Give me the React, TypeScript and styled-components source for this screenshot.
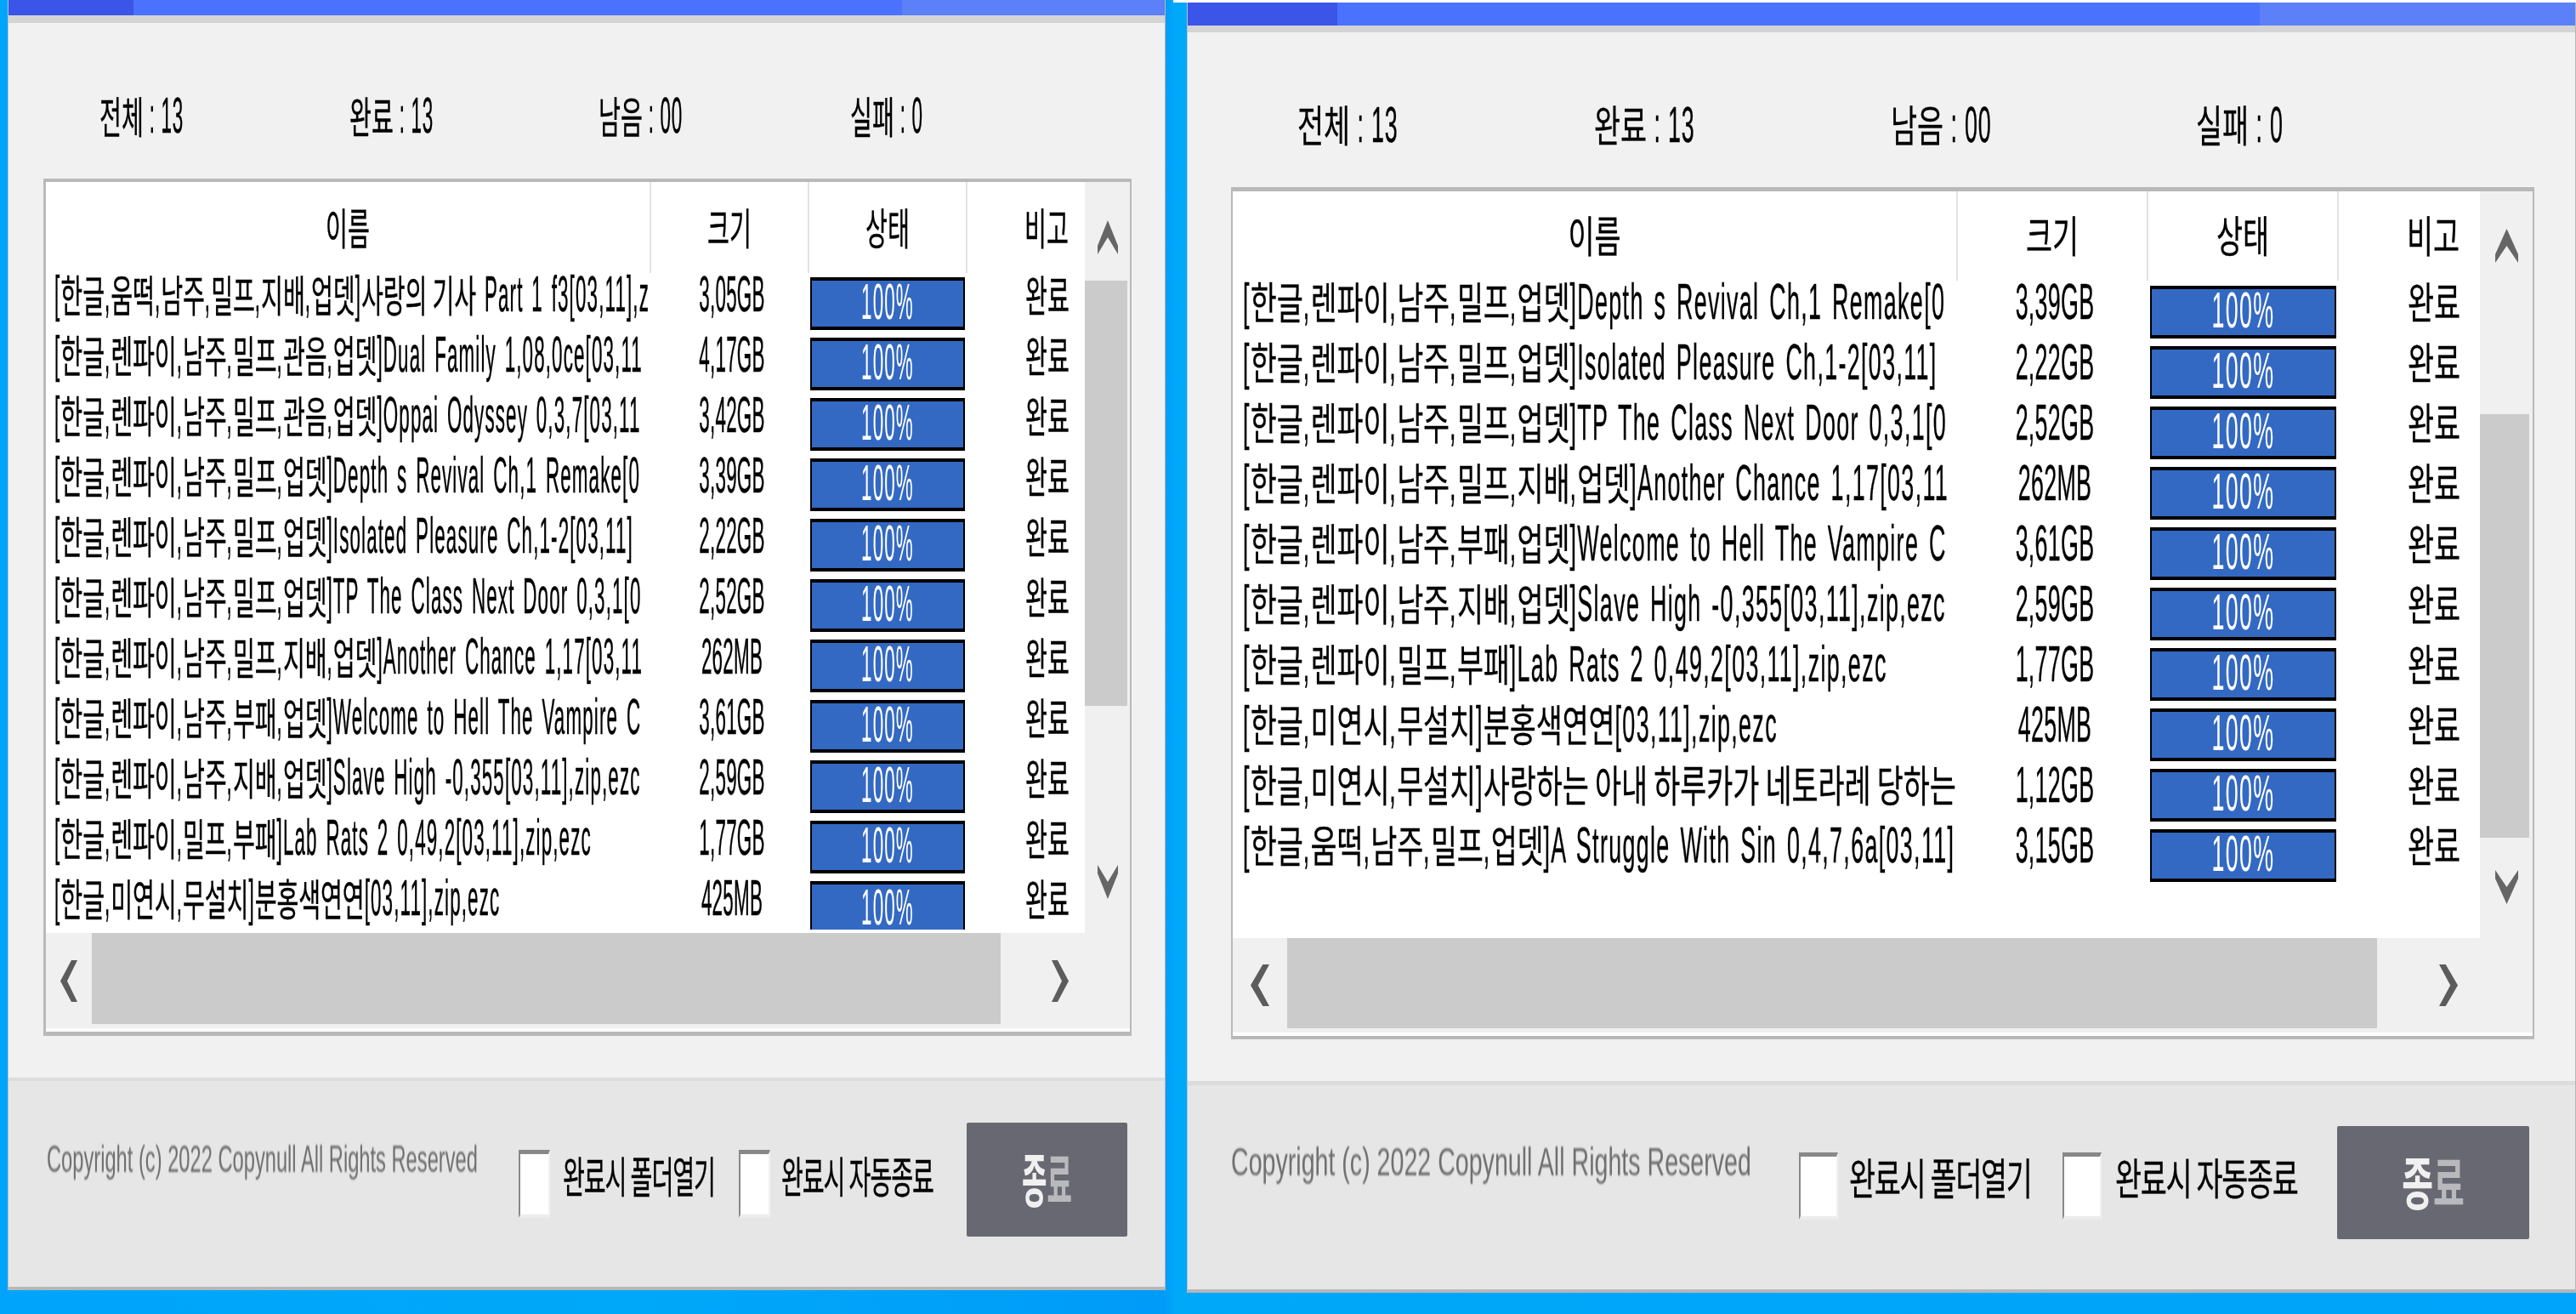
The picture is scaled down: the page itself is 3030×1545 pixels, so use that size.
import styled, { createGlobalStyle, ThemeProvider } from 'styled-components';

// every measure that differs between the two windows
const leftWin = {
  winW: 1362, winH: 1517, edge: 0, indent: 0, titleH: 18, bandH: 9,
  segs: '147px 904px 1fr', statCols: '294px 293px 296px auto', statPad: 107, statsH: 183,
  fs: 28.2, sy: 1.81, panelX: 41, panelW: 1280, panelH: 1008,
  bt: 4, bb: 5, bl: 3, br: 2, cols: '710px 186px 186px 140px', tableH: 883, headH: 107,
  namePad: 10, barL: 3, barT: 5, barW: 182, notePad: 52,
  vW: 53, thumbW: 50, thumbH: 500, upTop: 45, thumbTop: 31, downTop: 187, arrowW: 24,
  hH: 112, hLeft: 54, hThumbW: 1069, hThumbH: 107, arrowTop: 32, hArrowX: 60, hArrowW: 20,
  footPad: 45, footCols: '555px 52px 207px 50px 218px 189px', sepH: 4,
  copyTop: 67, copyFs: 23.7, copySy: 1.9, cbTop: 81, cbW: 37, cbH: 80, labelTop: 86,
  btnTop: 49, btnW: 189, btnH: 134, btnFs: 32, btnSy: 2.15,
};

const rightWin = {
  winW: 1634, winH: 1517, edge: 3, indent: 16, titleH: 27, bandH: 8,
  segs: '176px 1085px 1fr', statCols: '349px 349px 359px auto', statPad: 129, statsH: 182,
  fs: 33.8, sy: 1.51, panelX: 51, panelW: 1533, panelH: 1002,
  bt: 5, bb: 4, bl: 2, br: 2, cols: '851px 224px 224px 168px', tableH: 878, headH: 105,
  namePad: 12, barL: 4, barT: 6, barW: 219, notePad: 60,
  vW: 62, thumbW: 58, thumbH: 498, upTop: 44, thumbTop: 178, downTop: 38, arrowW: 27,
  hH: 111, hLeft: 64, hThumbW: 1282, hThumbH: 106, arrowTop: 31, hArrowX: 73, hArrowW: 22,
  footPad: 51, footCols: '668px 59px 251px 62px 261px 226px', sepH: 5,
  copyTop: 65, copyFs: 28.6, copySy: 1.6, cbTop: 79, cbW: 46, cbH: 79, labelTop: 84,
  btnTop: 48, btnW: 226, btnH: 133, btnFs: 40, btnSy: 1.7,
};

type Metrics = typeof leftWin;
const m = (k: keyof Metrics) => (p: any) => (p.theme as Metrics)[k];

const leftRows = [
  ['[한글,움떡,남주,밀프,지배,업뎃]사랑의 기사 Part 1 f3[03,11],z', '3,05GB'],
  ['[한글,렌파이,남주,밀프,관음,업뎃]Dual Family 1,08,0ce[03,11', '4,17GB'],
  ['[한글,렌파이,남주,밀프,관음,업뎃]Oppai Odyssey 0,3,7[03,11', '3,42GB'],
  ['[한글,렌파이,남주,밀프,업뎃]Depth s Revival Ch,1 Remake[0', '3,39GB'],
  ['[한글,렌파이,남주,밀프,업뎃]Isolated Pleasure Ch,1-2[03,11]', '2,22GB'],
  ['[한글,렌파이,남주,밀프,업뎃]TP The Class Next Door 0,3,1[0', '2,52GB'],
  ['[한글,렌파이,남주,밀프,지배,업뎃]Another Chance 1,17[03,11', '262MB'],
  ['[한글,렌파이,남주,부패,업뎃]Welcome to Hell The Vampire C', '3,61GB'],
  ['[한글,렌파이,남주,지배,업뎃]Slave High -0,355[03,11],zip,ezc', '2,59GB'],
  ['[한글,렌파이,밀프,부패]Lab Rats 2 0,49,2[03,11],zip,ezc', '1,77GB'],
  ['[한글,미연시,무설치]분홍색연연[03,11],zip,ezc', '425MB'],
];

const rightRows = [
  ...leftRows.slice(3, 6),
  ...leftRows.slice(6, 11),
  ['[한글,미연시,무설치]사랑하는 아내 하루카가 네토라레 당하는', '1,12GB'],
  ['[한글,움떡,남주,밀프,업뎃]A Struggle With Sin 0,4,7,6a[03,11]', '3,15GB'],
];

// hangul and latin runs get their own proportions, the latin of the old font is narrower and taller
const Runs = ({ text }: { text: string }) => (
  <>
    {text.split(/([\uAC00-\uD7A3]+)/).map((run, i) =>
      i % 2 === 1 || run === ' ' ? run : run && <Latin key={i}>{run}</Latin>
    )}
  </>
);

const Label = ({ text }: { text: string }) => (
  <Tall><Runs text={text} /></Tall>
);

const Chevron = ({ dir }: { dir: 'up' | 'down' | 'left' | 'right' }) => {
  if (dir === 'up' || dir === 'down') {
    return (
      <ArrowV viewBox="0 0 24 40" preserveAspectRatio="none">
        <path
          d={dir === 'up' ? 'M12 0 L24 30 V40 L12 20 L0 40 V30 Z' : 'M12 40 L24 10 V0 L12 20 L0 0 V10 Z'}
          fill="#666666"
        />
      </ArrowV>
    );
  }
  return (
    <ArrowH viewBox="0 0 20 49" preserveAspectRatio="none">
      <path
        d={dir === 'left' ? 'M13 0 H20 L8 24.5 L20 49 H13 L0 24.5 Z' : 'M7 0 H0 L12 24.5 L0 49 H7 L20 24.5 Z'}
        fill="#5c5c5c"
      />
    </ArrowH>
  );
};

const CopyWindow = ({ rows }: { rows: string[][] }) => (
  <Frame>
    <Win>
      <TitleBar>
        <TitleSeg $color="#3a55e8" />
        <TitleSeg $color="#4a72ff" />
        <TitleSeg $color="#5b80f8" />
      </TitleBar>
      <Band />
      <Main>
        <Stats>
          <Label text="전체 : 13" />
          <Label text="완료 : 13" />
          <Label text="남음 : 00" />
          <Label text="실패 : 0" />
        </Stats>
        <Panel>
          <TopPart>
            <Table>
              <Head>
                <HeadCell><Label text="이름" /></HeadCell>
                <HeadCell $divider><Label text="크기" /></HeadCell>
                <HeadCell $divider><Label text="상태" /></HeadCell>
                <NoteHead $divider><Label text="비고" /></NoteHead>
              </Head>
              {rows.map(([name, size], i) => (
                <Row key={name}>
                  <NameCell><Label text={name} /></NameCell>
                  <SizeCell><Label text={size} /></SizeCell>
                  <div>
                    {/* the 11th row runs out of the list and its bar is cut there */}
                    <Bar $cut={i === 10}><BarText><Latin>100%</Latin></BarText></Bar>
                  </div>
                  <NoteCell><Label text="완료" /></NoteCell>
                </Row>
              ))}
            </Table>
            <VScroll>
              <UpSlot><Chevron dir="up" /></UpSlot>
              <VThumb />
              <DownSlot><Chevron dir="down" /></DownSlot>
            </VScroll>
          </TopPart>
          <HScroll>
            <HSlotLeft><Chevron dir="left" /></HSlotLeft>
            <HThumb />
            <HSlotRight><Chevron dir="right" /></HSlotRight>
          </HScroll>
        </Panel>
      </Main>
      <Footer>
        <Copyright>Copyright (c) 2022 Copynull All Rights Reserved</Copyright>
        <Check type="checkbox" />
        <FootLabel><Label text="완료시 폴더열기" /></FootLabel>
        <Check type="checkbox" />
        <FootLabel><Label text="완료시 자동종료" /></FootLabel>
        <CloseButton>
          <span>종</span><DimGlyph>료</DimGlyph>
        </CloseButton>
      </Footer>
    </Win>
  </Frame>
);

const App = () => (
  <>
    <Global />
    <Desktop>
      <ThemeProvider theme={leftWin}>
        <CopyWindow rows={leftRows} />
      </ThemeProvider>
      <ThemeProvider theme={rightWin}>
        <CopyWindow rows={rightRows} />
      </ThemeProvider>
    </Desktop>
  </>
);

export default App;

const Global = createGlobalStyle`
  html, body { margin: 0; padding: 0; }
  body { font-family: "Liberation Sans", "Noto Sans CJK KR", sans-serif; }
`;

const Desktop = styled.div`
  width: 3030px;
  height: 1545px;
  overflow: hidden;
  display: flex;
  align-items: flex-start;
  gap: 9px;
  padding-left: 9px;
  box-sizing: border-box;
  background: linear-gradient(90deg, #00a5fb 0, #00a8f9 25%, #009bf8 45.2%, #00a8f9 45.6%, #00a4fa 100%);
`;

const Frame = styled.div`
  flex: none;
  padding: ${m('edge')}px 0 0 ${m('indent')}px;
  background: linear-gradient(#fff, #fff) top / 100% ${m('edge')}px no-repeat;
`;

const Win = styled.div`
  width: ${m('winW')}px;
  height: ${m('winH')}px;
  box-sizing: border-box;
  display: flex;
  flex-direction: column;
  border-left: 1px solid #b4c4d0;
  border-right: 1px solid #b5b5b5;
  border-bottom: 4px solid #b7b7b7;
  background: #e6e6e6;
`;

const TitleBar = styled.div`
  flex: none;
  height: ${m('titleH')}px;
  display: grid;
  grid-template-columns: ${m('segs')};
`;

const TitleSeg = styled.div<{ $color: string }>`
  background: ${(p) => p.$color};
`;

const Band = styled.div`
  flex: none;
  height: ${m('bandH')}px;
  background: #d4d4d4;
`;

const Main = styled.div`
  flex: none;
  background: #f1f1f1;
  padding-left: ${m('panelX')}px;
`;

const Tall = styled.span`
  display: inline-block;
  font-family: "Noto Sans CJK KR", sans-serif;
  font-size: ${m('fs')}px;
  line-height: 47px;
  color: #000;
  white-space: pre;
  -webkit-text-stroke: 0.2px currentColor;
  transform: scaleY(${m('sy')});
`;

const Latin = styled.span`
  display: inline-block;
  font-family: "Liberation Sans", sans-serif;
  font-size: 0.795em;
  line-height: 1.2;
  letter-spacing: 0.05em;
  word-spacing: 0.11em;
  white-space: pre;
  transform: scaleY(1.47);
  transform-origin: 0 78.9%;
`;

const Stats = styled.div`
  height: ${m('statsH')}px;
  box-sizing: border-box;
  padding-top: 84px;
  margin-left: ${(p: any) => p.theme.statPad - p.theme.panelX}px;
  display: grid;
  grid-template-columns: ${m('statCols')};
  justify-items: start;
  align-items: start;
  ${Latin} {
    letter-spacing: 0.03em;
    word-spacing: 0;
  }
`;

const Panel = styled.div`
  width: ${m('panelW')}px;
  height: ${m('panelH')}px;
  box-sizing: border-box;
  background: #fff;
  border-style: solid;
  border-color: #b9b9b9;
  border-width: ${m('bt')}px ${m('br')}px ${m('bb')}px ${m('bl')}px;
  margin-bottom: 49px;
`;

const TopPart = styled.div`
  display: flex;
`;

const Table = styled.div`
  flex: 1;
  height: ${m('tableH')}px;
  background: #fff;
`;

const Head = styled.div`
  height: ${m('headH')}px;
  display: grid;
  grid-template-columns: ${m('cols')};
`;

const HeadCell = styled.div<{ $divider?: boolean }>`
  display: flex;
  align-items: center;
  justify-content: center;
  padding-bottom: 4px;
  box-sizing: border-box;
  border-left: ${(p) => (p.$divider ? '2px solid #e3e3e3' : 'none')};
`;

const NoteHead = styled(HeadCell)`
  padding-left: ${(p: any) => p.theme.notePad - 4}px;
`;

const Row = styled.div`
  height: 71px;
  display: grid;
  grid-template-columns: ${m('cols')};
`;

/* long names stop at the column edge; the box is taller than the row so the stretched glyphs fit in it */
const NameCell = styled.div`
  margin: -20px 0;
  padding: 20px 0 0 ${m('namePad')}px;
  overflow-x: clip;
  letter-spacing: -0.15px;
`;

const SizeCell = styled.div`
  padding-left: 8px;
  display: flex;
  justify-content: center;
  align-items: flex-start;
  ${Latin} {
    letter-spacing: 0.01em;
  }
`;

const NoteCell = styled.div`
  padding-left: ${m('notePad')}px;
  display: flex;
  justify-content: center;
  align-items: flex-start;
`;

const Bar = styled.div<{ $cut?: boolean }>`
  width: ${m('barW')}px;
  height: ${(p) => (p.$cut ? 57 : 62)}px;
  box-sizing: border-box;
  margin: ${m('barT')}px 0 0 ${m('barL')}px;
  background: #3369c2;
  border: solid #000;
  border-width: 4px 2px ${(p) => (p.$cut ? 0 : 4)}px;
  padding-bottom: ${(p) => (p.$cut ? 1 : 6)}px;
  display: flex;
  align-items: center;
  justify-content: center;
`;

const BarText = styled(Tall)`
  color: #fff;
  line-height: 46px;
  -webkit-text-stroke: 0;
`;

const VScroll = styled.div`
  flex: none;
  width: ${m('vW')}px;
  background: #f0f0f0;
  display: flex;
  flex-direction: column;
`;

const ArrowV = styled.svg`
  display: block;
  width: ${m('arrowW')}px;
  height: 40px;
`;

const ArrowH = styled.svg`
  display: block;
  width: ${m('hArrowW')}px;
  height: 49px;
`;

const UpSlot = styled.div`
  margin-top: ${m('upTop')}px;
  align-self: center;
`;

const VThumb = styled.div`
  margin-top: ${m('thumbTop')}px;
  width: ${m('thumbW')}px;
  height: ${m('thumbH')}px;
  background: #cbcbcb;
`;

const DownSlot = styled.div`
  margin-top: ${m('downTop')}px;
  align-self: center;
`;

const HScroll = styled.div`
  height: ${m('hH')}px;
  background: #f0f0f0;
  display: flex;
  align-items: flex-start;
`;

const HSlotLeft = styled.div`
  flex: none;
  width: ${m('hLeft')}px;
  padding-top: ${m('arrowTop')}px;
  display: flex;
  justify-content: center;
`;

const HThumb = styled.div`
  flex: none;
  width: ${m('hThumbW')}px;
  height: ${m('hThumbH')}px;
  background: #cbcbcb;
`;

const HSlotRight = styled.div`
  padding: ${m('arrowTop')}px 0 0 ${m('hArrowX')}px;
`;

const Footer = styled.div`
  flex: 1;
  border-top: ${m('sepH')}px solid #dcdcdc;
  padding-left: ${m('footPad')}px;
  display: grid;
  grid-template-columns: ${m('footCols')};
  align-items: start;
`;

const Copyright = styled.div`
  margin-top: ${m('copyTop')}px;
  font-family: "Liberation Sans", sans-serif;
  font-size: ${m('copyFs')}px;
  line-height: 50px;
  white-space: nowrap;
  color: #6f6f6f;
  transform: scaleY(${m('copySy')});
  transform-origin: 0 50%;
  filter: blur(0.5px);
`;

const Check = styled.input`
  appearance: none;
  margin: ${m('cbTop')}px 0 0;
  width: ${m('cbW')}px;
  height: ${m('cbH')}px;
  box-sizing: border-box;
  background: #fff;
  border-style: solid;
  border-width: 5px 2px 4px 2px;
  border-color: #888 #f2f2f2 #ececec #888;
`;

const FootLabel = styled.div`
  margin-top: ${m('labelTop')}px;
  letter-spacing: -0.04em;
  font-size: ${m('fs')}px;
`;

const CloseButton = styled.button`
  margin: ${m('btnTop')}px 0 0;
  width: ${m('btnW')}px;
  height: ${m('btnH')}px;
  border: none;
  border-radius: 2px;
  padding: 0 0 6px;
  background: #686872;
  color: #f0f0f0;
  font-family: "Noto Sans CJK KR", sans-serif;
  font-weight: 600;
  font-size: ${m('btnFs')}px;
  display: flex;
  align-items: center;
  justify-content: center;
  filter: blur(0.4px);
  & > span {
    display: inline-block;
    transform: scaleY(${m('btnSy')});
  }
`;

const DimGlyph = styled.span`
  color: #b9b9bd;
`;
